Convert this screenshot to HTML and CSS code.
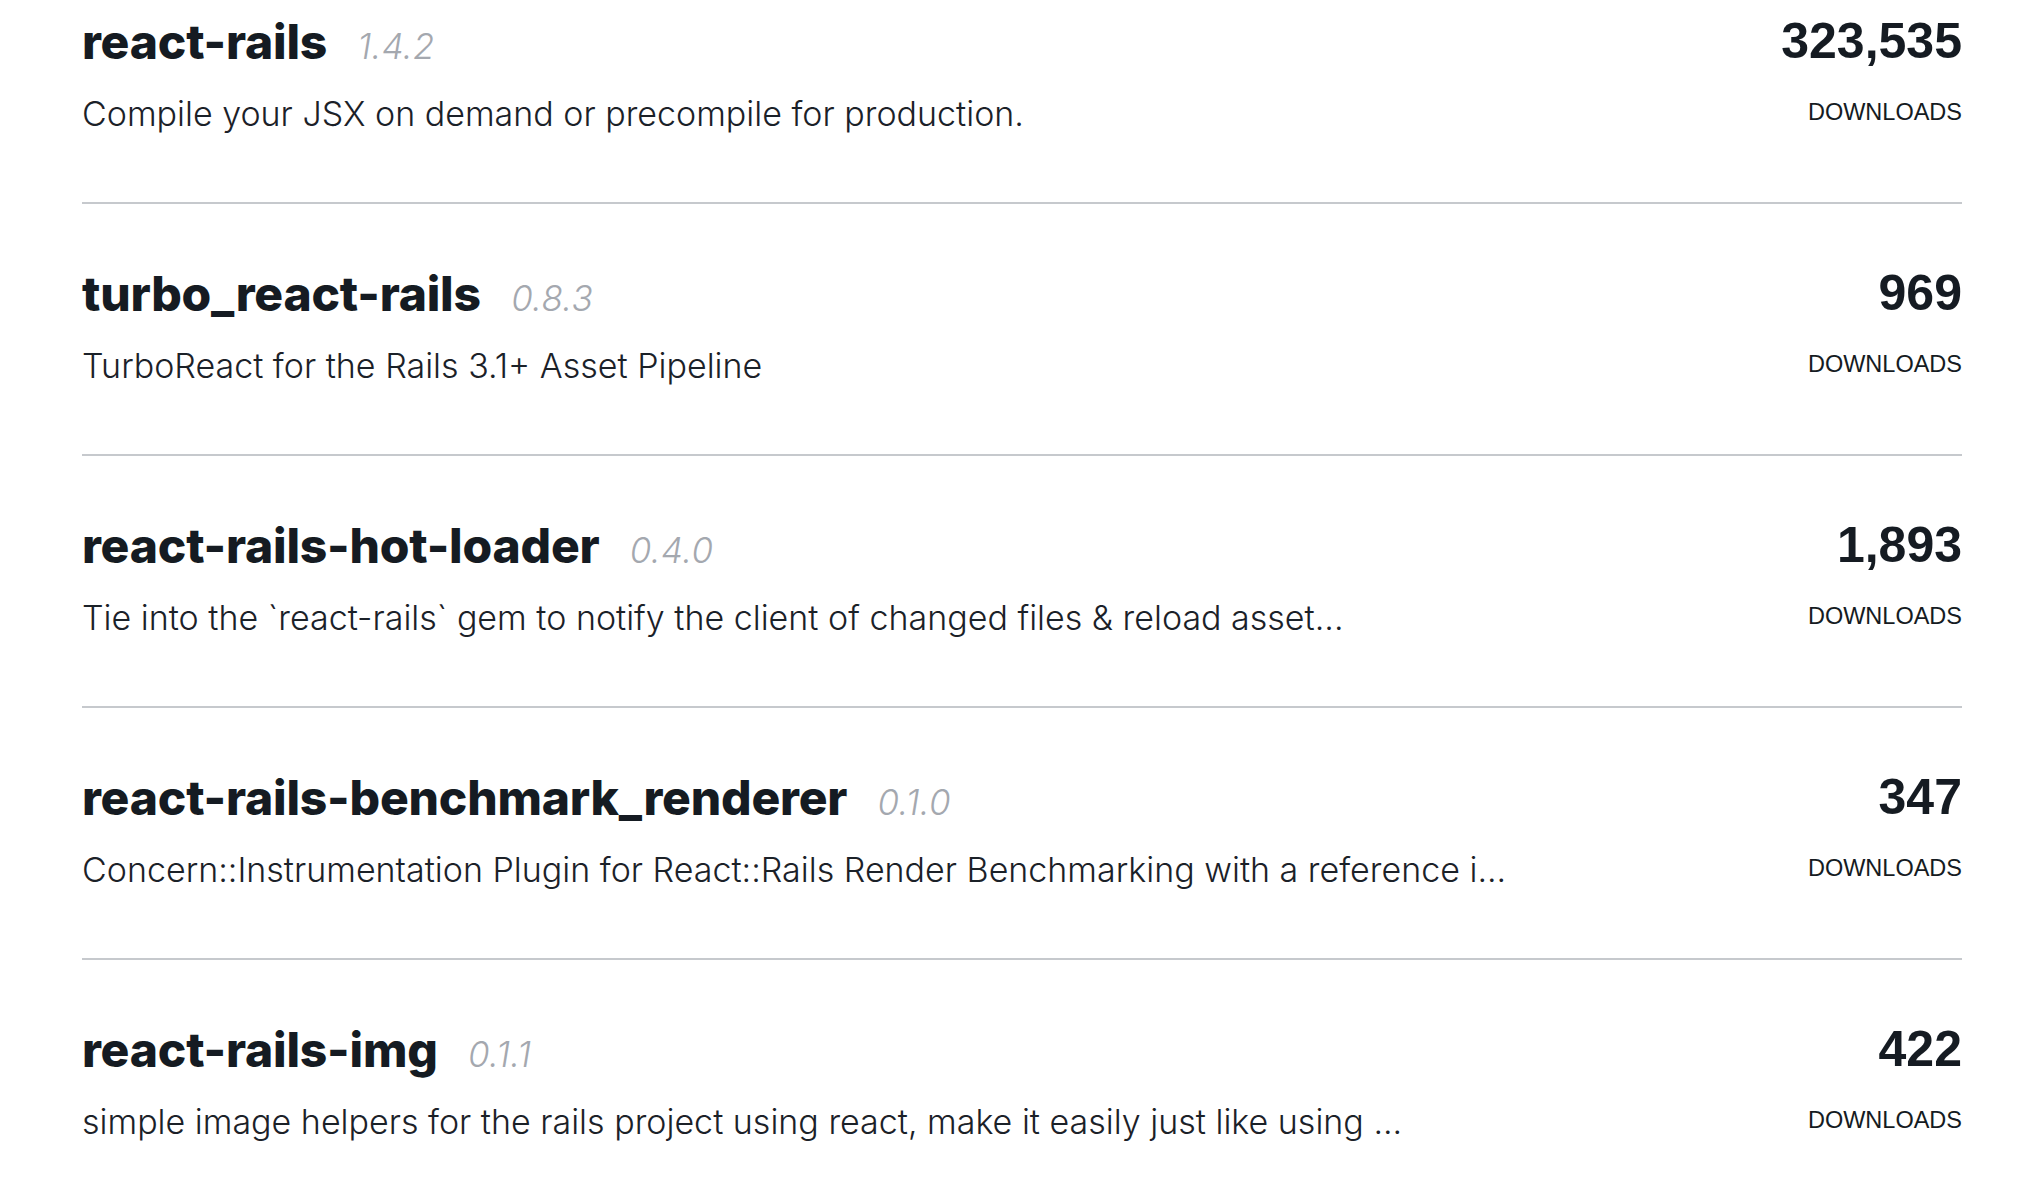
FILE: index.html
```html
<!DOCTYPE html>
<html lang="en">
<head>
<meta charset="utf-8">
<title>Search results</title>
<link rel="stylesheet" href="styles.css">
</head>
<body>
<main class="list">
  <div class="gem">
    <div class="gem-info">
      <h2 class="gem-title">react-rails <span class="gem-version">1.4.2</span></h2>
      <p class="gem-desc">Compile your JSX on demand or precompile for production.</p>
    </div>
    <div class="gem-stats">
      <div class="gem-count">323,535</div>
      <div class="gem-label">DOWNLOADS</div>
    </div>
  </div>
  <div class="gem">
    <div class="gem-info">
      <h2 class="gem-title">turbo_react-rails <span class="gem-version">0.8.3</span></h2>
      <p class="gem-desc">TurboReact for the Rails 3.1+ Asset Pipeline</p>
    </div>
    <div class="gem-stats">
      <div class="gem-count">969</div>
      <div class="gem-label">DOWNLOADS</div>
    </div>
  </div>
  <div class="gem">
    <div class="gem-info">
      <h2 class="gem-title">react-rails-hot-loader <span class="gem-version">0.4.0</span></h2>
      <p class="gem-desc">Tie into the `react-rails` gem to notify the client of changed files &amp; reload asset...</p>
    </div>
    <div class="gem-stats">
      <div class="gem-count">1,893</div>
      <div class="gem-label">DOWNLOADS</div>
    </div>
  </div>
  <div class="gem">
    <div class="gem-info">
      <h2 class="gem-title">react-rails-benchmark_renderer <span class="gem-version">0.1.0</span></h2>
      <p class="gem-desc">Concern::Instrumentation Plugin for React::Rails Render Benchmarking with a reference i...</p>
    </div>
    <div class="gem-stats">
      <div class="gem-count">347</div>
      <div class="gem-label">DOWNLOADS</div>
    </div>
  </div>
  <div class="gem">
    <div class="gem-info">
      <h2 class="gem-title">react-rails-img <span class="gem-version">0.1.1</span></h2>
      <p class="gem-desc">simple image helpers for the rails project using react, make it easily just like using ...</p>
    </div>
    <div class="gem-stats">
      <div class="gem-count">422</div>
      <div class="gem-label">DOWNLOADS</div>
    </div>
  </div>
</main>
</body>
</html>
```
FILE: styles.css
```css
html, body {
  margin: 0;
  padding: 0;
  background: #ffffff;
}

body {
  font-family: Inter, "Noto Sans", sans-serif;
  color: #151b22;
  overflow: hidden;
}

.list {
  padding: 0 70px 0 82px;
}

.gem {
  display: flex;
  justify-content: space-between;
  align-items: flex-start;
  padding: 61px 0 66px;
  border-bottom: 2px solid #c6c9cd;
}

.gem:first-child {
  padding-top: 13px;
}

.gem-info {
  margin-top: 1px;
  min-width: 0;
}

.gem-title {
  margin: 0;
  font-size: 48px;
  line-height: 56px;
  font-weight: 800;
  letter-spacing: -0.2px;
  color: #151b22;
}

.gem-version {
  margin-left: 20px;
  font-size: 35px;
  line-height: 30px;
  font-weight: 300;
  font-style: italic;
  color: #a4a8af;
  letter-spacing: 0.3px;
}

.gem-desc {
  margin: 22px 0 0;
  font-size: 34px;
  line-height: 44px;
  font-weight: 300;
  color: #1b2128;
  white-space: nowrap;
}

.gem-stats {
  text-align: right;
  font-family: "Liberation Sans", Arial, sans-serif;
}

.gem-count {
  font-size: 50px;
  line-height: 56px;
  font-weight: 700;
  color: #151b22;
}

.gem-label {
  margin-top: 29px;
  font-size: 23.5px;
  line-height: 28px;
  color: #151b22;
}
```
